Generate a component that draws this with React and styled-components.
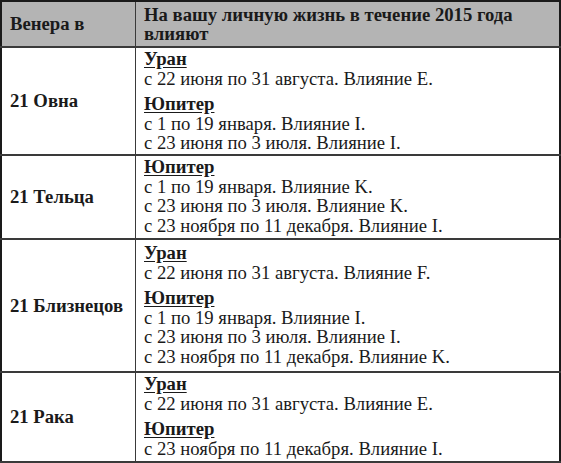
import React from 'react';
import styled, { createGlobalStyle } from 'styled-components';

const GlobalStyle = createGlobalStyle`
  html, body {
    margin: 0;
    padding: 0;
    background: #ffffff;
  }
`;

const Table = styled.table`
  width: 561px;
  border-collapse: collapse;
  border: 2px solid #1a1a1a;
  color: #1a1a1a;
  table-layout: fixed;
`;
const Row = styled.tr`
  height: ${p => p.h}px;
`;
const cellText = `
  font-family: 'Liberation Serif', 'DejaVu Serif', serif;
  font-size: 18.7px;
  line-height: 19.5px;
  border: 1px solid #3a3a3a;
  border-bottom-width: 2px;
`;
const HeadCell = styled.th`
  ${cellText}
  line-height: 19px;
  background-color: #b4b4b4;
  text-align: left;
  vertical-align: middle;
  font-weight: bold;
  padding: 2px 8px 3px 8px;
  width: ${p => p.width || 'auto'};
`;
const SignCell = styled.td`
  ${cellText}
  font-weight: bold;
  vertical-align: middle;
  padding: 0 8px;
`;
const InfoCell = styled.td`
  ${cellText}
  vertical-align: top;
  padding: ${p => p.top}px 8px 1px 8px;
`;
const Planet = styled.div`
  font-weight: bold;
  text-decoration: underline;
  text-underline-offset: 2px;
  margin-top: ${p => (p.first ? '0' : '6px')};
`;
const Period = styled.div``;

const rows = [
  {
    sign: '21 Овна',
    h: 108,
    top: 1,
    planets: [
      { name: 'Уран', periods: ['с 22 июня по 31 августа. Влияние E.'] },
      { name: 'Юпитер', periods: ['с 1 по 19 января. Влияние I.', 'с 23 июня по 3 июля. Влияние I.'] },
    ],
  },
  {
    sign: '21 Тельца',
    h: 84,
    top: 1,
    planets: [
      {
        name: 'Юпитер',
        periods: [
          'с 1 по 19 января. Влияние K.',
          'с 23 июня по 3 июля. Влияние K.',
          'с 23 ноября по 11 декабря. Влияние I.',
        ],
      },
    ],
  },
  {
    sign: '21 Близнецов',
    h: 133,
    top: 3,
    planets: [
      { name: 'Уран', periods: ['с 22 июня по 31 августа. Влияние F.'] },
      {
        name: 'Юпитер',
        periods: [
          'с 1 по 19 января. Влияние I.',
          'с 23 июня по 3 июля. Влияние I.',
          'с 23 ноября по 11 декабря. Влияние K.',
        ],
      },
    ],
  },
  {
    sign: '21 Рака',
    h: 90,
    top: 1,
    planets: [
      { name: 'Уран', periods: ['с 22 июня по 31 августа. Влияние E.'] },
      { name: 'Юпитер', periods: ['с 23 ноября по 11 декабря. Влияние I.'] },
    ],
  },
];

const App = () => (
  <>
    <GlobalStyle />
    <Table>
      <thead>
        <Row h={46}>
          <HeadCell width="117px">Венера в</HeadCell>
          <HeadCell>На вашу личную жизнь в течение 2015 года влияют</HeadCell>
        </Row>
      </thead>
      <tbody>
        {rows.map(row => (
          <Row key={row.sign} h={row.h}>
            <SignCell>{row.sign}</SignCell>
            <InfoCell top={row.top}>
              {row.planets.map((planet, i) => (
                <React.Fragment key={planet.name}>
                  <Planet first={i === 0}>{planet.name}</Planet>
                  {planet.periods.map(period => (
                    <Period key={period}>{period}</Period>
                  ))}
                </React.Fragment>
              ))}
            </InfoCell>
          </Row>
        ))}
      </tbody>
    </Table>
  </>
);

export default App;
